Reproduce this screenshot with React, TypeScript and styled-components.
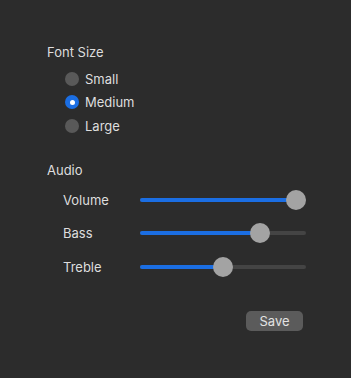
import React from "react";
import styled, { createGlobalStyle } from "styled-components";

const Global = createGlobalStyle`
  html, body { margin: 0; padding: 0; background: #2c2c2c; }
  body { font-family: Inter, "Noto Sans", "Liberation Sans", sans-serif; }
`;

const Page = styled.div`
  width: 351px;
  height: 378px;
  box-sizing: border-box;
  padding: 44px 45px 0 47px;
  background: #2c2c2c;
  color: #dedede;
  font-size: 13px;
  display: flex;
  flex-direction: column;
`;

const SectionTitle = styled.div`
  height: 16px;
  line-height: 16px;
`;

const RadioGroup = styled.div`
  display: flex;
  flex-direction: column;
  margin: 7px 0 0 18px;
`;

const RadioRow = styled.label`
  display: flex;
  align-items: center;
  gap: 6px;
  height: 23.5px;
`;

const RadioDot = styled.span<{ $on: boolean }>`
  width: 14px;
  height: 14px;
  border-radius: 50%;
  box-sizing: border-box;
  background: ${(p) => (p.$on ? "#1b6ee3" : "#595959")};
  display: flex;
  align-items: center;
  justify-content: center;
  &::after {
    content: "";
    width: 5px;
    height: 5px;
    border-radius: 50%;
    background: #fff;
    display: ${(p) => (p.$on ? "block" : "none")};
  }
`;

const AudioTitle = styled(SectionTitle)`
  margin-top: 24px;
`;

const SliderList = styled.div`
  display: flex;
  flex-direction: column;
  margin: 6px 0 0 16px;
`;

const SliderRow = styled.div`
  display: grid;
  grid-template-columns: 77px 166px;
  align-items: center;
  height: 33.3px;
`;

const Track = styled.div`
  position: relative;
  height: 4px;
  border-radius: 2px;
  background: #444444;
`;

const Fill = styled.div`
  height: 100%;
  border-radius: 2px;
  background: #1b6ee3;
`;

const Thumb = styled.div`
  position: absolute;
  top: 50%;
  width: 20px;
  height: 20px;
  margin: -10px 0 0 -10px;
  border-radius: 50%;
  background: #a3a3a3;
`;

const Footer = styled.div`
  display: flex;
  justify-content: flex-end;
  margin-top: 28px;
  padding-right: 3px;
`;

const SaveButton = styled.button`
  width: 57px;
  height: 20px;
  border: none;
  border-radius: 5px;
  background: #5b5b5b;
  color: #e2e2e2;
  font-family: inherit;
  font-size: 13px;
  padding: 0;
`;

const sizes = ["Small", "Medium", "Large"];
const sliders = [
  { name: "Volume", value: 1 },
  { name: "Bass", value: 0.75 },
  { name: "Treble", value: 0.5 },
];

export default function App() {
  return (
    <>
      <Global />
      <Page>
        <SectionTitle>Font Size</SectionTitle>
        <RadioGroup>
          {sizes.map((s) => (
            <RadioRow key={s}>
              <RadioDot $on={s === "Medium"} />
              {s}
            </RadioRow>
          ))}
        </RadioGroup>
        <AudioTitle>Audio</AudioTitle>
        <SliderList>
          {sliders.map((sl) => {
            const pos = 10 + sl.value * 146;
            return (
              <SliderRow key={sl.name}>
                <span>{sl.name}</span>
                <Track>
                  <Fill style={{ width: `${pos}px` }} />
                  <Thumb style={{ left: `${pos}px` }} />
                </Track>
              </SliderRow>
            );
          })}
        </SliderList>
        <Footer>
          <SaveButton>Save</SaveButton>
        </Footer>
      </Page>
    </>
  );
}
